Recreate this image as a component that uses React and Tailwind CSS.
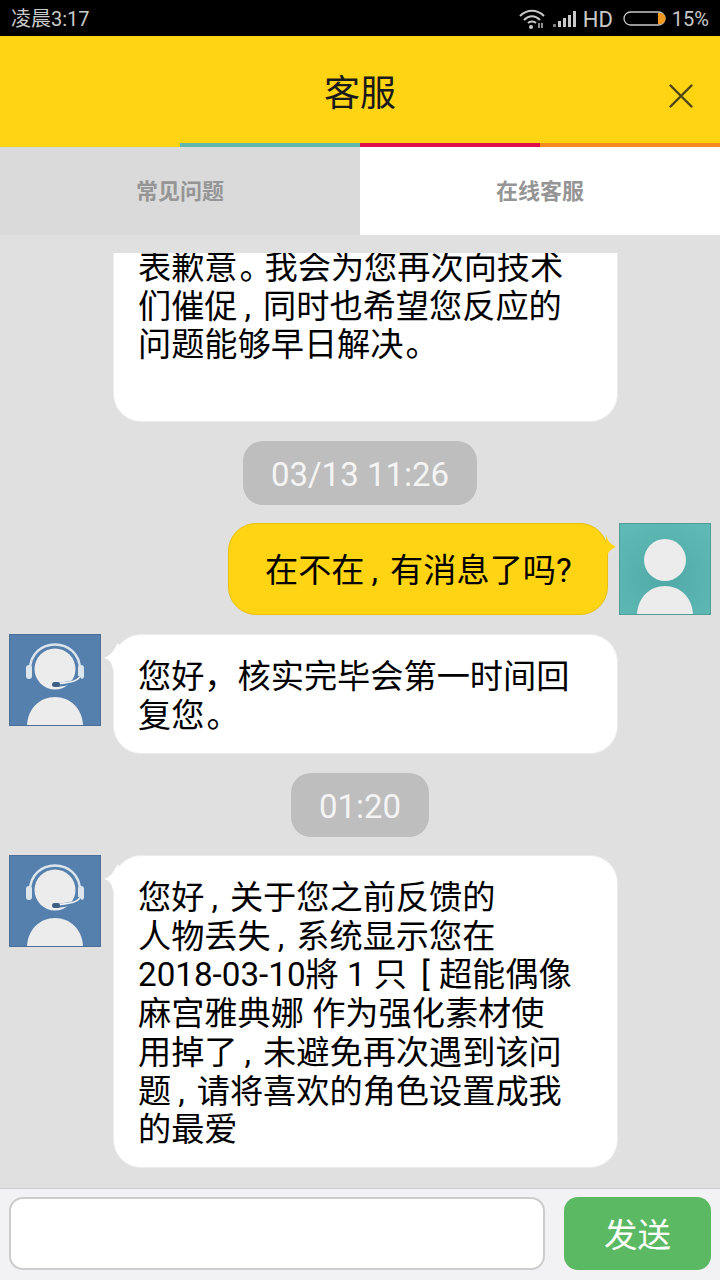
const FONT = "font-['Roboto','Noto_Sans_CJK_SC','Noto_Sans',sans-serif]";

function C() {
  return <span className="ml-[7px] mr-[12px]">,</span>;
}

function P() {
  return <span className="inline-block w-[27px] pl-[2px]">。</span>;
}

const DOME = "M18 91 C19 74 31 63 46 63 C61 63 73 74 74 91 Z";

function AgentAvatar() {
  return (
    <svg viewBox="0 0 92 92" className="w-[92px] h-[92px] shrink-0 block">
      <rect x="0.5" y="0.5" width="91" height="91" fill="#5580ae" stroke="#4a6f98" />
      <path d="M21 36 C21 2 71 2 71 36" fill="none" stroke="#dde5ec" strokeWidth="2.5" />
      <circle cx="46" cy="35" r="20.5" fill="#ececec" />
      <rect x="17" y="31" width="6" height="14" rx="3" fill="#dde5ec" />
      <rect x="69" y="31" width="6" height="14" rx="3" fill="#dde5ec" />
      <path d="M71 43 C66 50 58 49 48 51" fill="none" stroke="#5580ae" strokeWidth="4" />
      <path d="M71 43 C66 49 58 48 48 50" fill="none" stroke="#eef2f5" strokeWidth="1.6" />
      <rect x="43" y="48" width="8" height="5" rx="2.5" fill="#3d5f85" />
      <path d={DOME} fill="#ececec" />
    </svg>
  );
}

function UserAvatar() {
  return (
    <svg viewBox="0 0 92 92" className="w-[92px] h-[92px] shrink-0 block">
      <defs>
        <radialGradient id="teal" cx="50%" cy="60%" r="70%">
          <stop offset="0%" stopColor="#50a9a6" />
          <stop offset="100%" stopColor="#5fbab5" />
        </radialGradient>
      </defs>
      <rect x="0.5" y="0.5" width="91" height="91" fill="url(#teal)" stroke="#4f9c99" />
      <circle cx="46" cy="37" r="21" fill="#ececec" />
      <path d={DOME} fill="#ececec" />
    </svg>
  );
}

function Pill({ children, w }) {
  return (
    <div className="flex justify-center">
      <div className={`h-16 pt-1 rounded-[20px] bg-[#bebebe] text-[#f4f4f4] flex items-center justify-center text-[33px] font-['Roboto',sans-serif] ${w}`}>
        {children}
      </div>
    </div>
  );
}

function AgentBubble({ children, className = "" }) {
  return (
    <div className={`relative w-[505px] ml-3 bg-white rounded-[28px] border border-[#ececec] pl-[24px] pt-[23px] text-[33.2px] leading-[38.7px] text-black ${className}`}>
      <svg viewBox="0 0 16 36" className="absolute left-[-11px] top-[-1px] w-4 h-9">
        <path d="M14 10 C11 17 7 22 1 24 C6 25 9 28 10 36 L16 36 L16 10 Z" fill="#ffffff" />
      </svg>
      {children}
    </div>
  );
}

export default function App() {
  return (
    <div className={`w-[720px] h-[1280px] flex flex-col bg-[#e0e0e0] overflow-hidden ${FONT}`}>
      <div className="h-9 shrink-0 bg-black flex items-center justify-between pt-[2px] pl-[11px] pr-[11px] text-[#c9c9c9]">
        <span className="text-[20px]">凌晨3:17</span>
        <div className="flex items-center">
          <svg viewBox="0 0 26 20" className="w-[26px] h-5 mr-[8px]">
            <path d="M1 7 C8 0 18 0 25 7" fill="none" stroke="#c9c9c9" strokeWidth="2" />
            <path d="M5 11 C10 6 16 6 21 11" fill="none" stroke="#c9c9c9" strokeWidth="2" />
            <path d="M9 14 C11 12 15 12 17 14" fill="none" stroke="#c9c9c9" strokeWidth="2" />
            <circle cx="12" cy="18" r="2" fill="#c9c9c9" />
            <path d="M20 14 v5 M23 14 v5" stroke="#c9c9c9" strokeWidth="1.4" />
          </svg>
          <svg viewBox="0 0 23 16" className="w-[23px] h-4 mr-[7px]">
            <rect x="0" y="13" width="3" height="3" fill="#7d7d7d" />
            <rect x="5" y="10" width="3" height="6" fill="#c9c9c9" />
            <rect x="10" y="7" width="3" height="9" fill="#c9c9c9" />
            <rect x="15" y="4" width="3" height="12" fill="#c9c9c9" />
            <rect x="20" y="0" width="3" height="16" fill="#c9c9c9" />
          </svg>
          <span className="text-[22px] font-['Roboto',sans-serif] mr-[10px]">HD</span>
          <svg viewBox="0 0 46 16" className="w-[46px] h-4 mr-[3px]">
            <rect x="1" y="1" width="41" height="13" rx="6.5" fill="none" stroke="#c9c9c9" strokeWidth="1.3" />
            <path d="M35 2 h2 a5.5 5.5 0 0 1 0 11 h-2 Z" fill="#f0981f" />
          </svg>
          <span className="text-[20px] font-['Roboto',sans-serif]">15%</span>
        </div>
      </div>

      <div className="relative h-[107px] shrink-0 pt-2 bg-[#ffd412] flex items-center justify-center">
        <span className="text-[36px] text-[#1a1a1a]">客服</span>
        <svg viewBox="0 0 24 24" className="absolute right-[27px] top-[48px] w-6 h-6">
          <path d="M1.5 1.5 L22.5 22.5 M22.5 1.5 L1.5 22.5" stroke="#4d4518" strokeWidth="2.4" strokeLinecap="round" />
        </svg>
      </div>

      <div className="h-1 shrink-0 flex bg-[#ffd412]">
        <div className="w-[180px]" />
        <div className="w-[180px] bg-[#5fb8ac]" />
        <div className="w-[180px] bg-[#dc1248]" />
        <div className="w-[180px] bg-[#f58a1f]" />
      </div>

      <div className="h-[88px] shrink-0 flex text-[22px] font-bold text-[#959595]">
        <div className="w-1/2 bg-[#dadada] flex items-center justify-center">常见问题</div>
        <div className="w-1/2 bg-white flex items-center justify-center">在线客服</div>
      </div>

      <div className="flex-1 min-h-0 flex flex-col pt-[18px] overflow-hidden">
        <div className="h-[169px] ml-[113px] w-[505px] bg-white rounded-b-[28px] border-b border-x border-[#ececec] pl-[24px] text-[33.2px] leading-[38.7px] text-black overflow-hidden">
          <div className="mt-[-4px]">
            表歉意<P />我会为您再次向技术<br />
            们催促<C />同时也希望您反应的<br />
            问题能够早日解决<P />
          </div>
        </div>

        <div className="mt-[19px]"><Pill w="w-[234px]">03/13 11:26</Pill></div>

        <div className="mt-[18px] flex justify-end pr-[9px]">
          <div className="relative w-[380px] h-[92px] mr-[11px] pt-1 bg-[#ffd412] rounded-[28px] border border-[#e8c012] flex items-center pl-[36px] text-[33.2px] text-black">
            <svg viewBox="0 0 12 24" className="absolute right-[-10px] top-[10px] w-3 h-6">
              <path d="M1 0 C2 7 6 10 11 13 C6 15 2 19 1 24 Z" fill="#ffd412" />
            </svg>
            <span>在不在<C />有消息了吗?</span>
          </div>
          <UserAvatar />
        </div>

        <div className="mt-[19px] flex pl-[9px]">
          <AgentAvatar />
          <AgentBubble className="h-[120px]">
            您好，核实完毕会第一时间回<br />
            复您<P />
          </AgentBubble>
        </div>

        <div className="mt-[19px]"><Pill w="w-[138px]">01:20</Pill></div>

        <div className="mt-[18px] flex pl-[9px]">
          <AgentAvatar />
          <AgentBubble className="h-[313px]">
            您好<C />关于您之前反馈的<br />
            人物丢失<C />系统显示您在<br />
            2018-03-10將 1 只<span className="ml-[14px] mr-[9px]">[</span>超能偶像<br />
            麻宫雅典娜 作为强化素材使<br />
            用掉了<C />未避免再次遇到该问<br />
            题<C />请将喜欢的角色设置成我<br />
            的最爱
          </AgentBubble>
        </div>
      </div>

      <div className="h-[92px] shrink-0 bg-[#f2f2f4] border-t border-[#cfcfcf] flex items-start pt-2 pl-[9px] pr-[9px] gap-[19px]">
        <div className="w-[537px] h-[73px] bg-white rounded-[14px] border-2 border-[#cccccc]" />
        <div className="w-[147px] h-[73px] pt-[6px] bg-[#5cb963] rounded-[14px] text-white text-[33.5px] flex items-center justify-center">发送</div>
      </div>
    </div>
  );
}
